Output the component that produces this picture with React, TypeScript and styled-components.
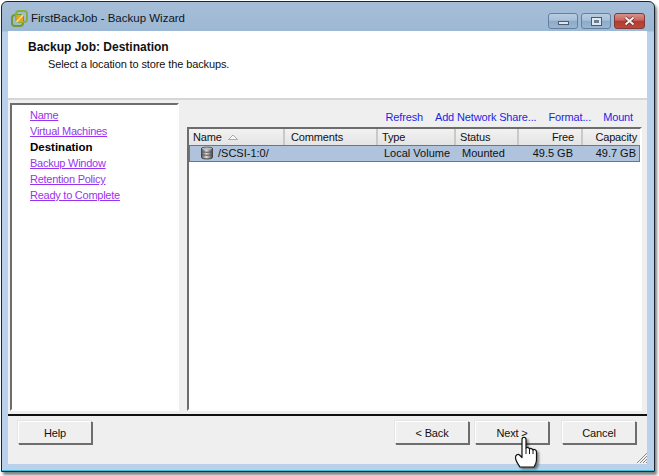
import React from "react";
import styled, { createGlobalStyle } from "styled-components";

const GlobalStyle = createGlobalStyle`
  html, body {
    margin: 0;
    padding: 0;
    background: #fff;
  }
  body {
    font-family: "Liberation Sans", Arial, sans-serif;
    font-size: 11px;
    letter-spacing: -0.15px;
    color: #111;
  }
`;

const Page = styled.div`
  width: 659px;
  height: 476px;
  padding: 1px 0 0 1px;
  box-sizing: border-box;
  overflow: hidden;
  position: relative;
`;

const Window = styled.div`
  width: 654px;
  height: 471px;
  box-sizing: border-box;
  border: 1px solid #1c2530;
  border-radius: 6px 6px 0 0;
  background: linear-gradient(180deg, #a6bed8 0, #9db8d4 29px, #b9d1ea 30px, #b9d1ea 100%);
  box-shadow: 2px 3px 3px rgba(0, 0, 0, 0.5), inset 0 -1px 0 #3fc3dc;
  padding: 0 7px 7px 6px;
  display: flex;
  flex-direction: column;
`;

const TitleBar = styled.div`
  height: 29px;
  flex: none;
  display: flex;
  align-items: center;
  gap: 3px;
  padding: 3px 0 0 3px;
  box-sizing: border-box;
`;

const Title = styled.div`
  flex: 1;
  font-size: 11.5px;
  letter-spacing: 0;
  color: #10151c;
`;

const CaptionButtons = styled.div`
  display: flex;
  gap: 3px;
  align-self: flex-start;
  margin: 8px 2px 0 0;
`;

const CaptionButton = styled.div<{ $close?: boolean }>`
  width: ${({ $close }) => ($close ? 31 : 30)}px;
  height: 16px;
  box-sizing: border-box;
  border: 1px solid ${({ $close }) => ($close ? "#7d3a36" : "#64809f")};
  border-radius: 3px;
  display: flex;
  align-items: center;
  justify-content: center;
  background: ${({ $close }) =>
    $close
      ? "linear-gradient(180deg, #d9928a 0, #c9665c 45%, #b23a2e 50%, #bb4a3c 100%)"
      : "linear-gradient(180deg, #b9cde2 0, #a8c0da 45%, #8daac9 50%, #9ab6d2 100%)"};
`;

const MinimizeGlyph = styled.div`
  width: 11px;
  height: 4px;
  margin-top: 3px;
  background: #dfe6ee;
  border: 1px solid #4d5b6b;
  box-sizing: border-box;
`;

const MaximizeGlyph = styled.div`
  width: 11px;
  height: 9px;
  background: #dfe6ee;
  border: 1px solid #4d5b6b;
  box-sizing: border-box;
  display: flex;
  align-items: center;
  justify-content: center;
  &::after {
    content: "";
    width: 5px;
    height: 3px;
    background: #6a7f96;
  }
`;

const Client = styled.div`
  flex: 1;
  min-height: 0;
  display: flex;
  flex-direction: column;
  background: #efefef;
`;

const Header = styled.div`
  height: 67px;
  flex: none;
  background: #fff;
  border-bottom: 2px solid #d6d6d6;
  box-sizing: content-box;
  overflow: hidden;
`;

const HeaderTitle = styled.div`
  font-weight: 700;
  font-size: 12px;
  letter-spacing: 0;
  line-height: 14px;
  margin: 9px 0 0 20px;
`;

const HeaderText = styled.div`
  line-height: 14px;
  letter-spacing: -0.12px;
  margin: 3px 0 0 40px;
`;

const Body = styled.div`
  flex: 1;
  min-height: 0;
  display: flex;
  gap: 8px;
  padding: 3px 5px 3px 2px;
`;

const Steps = styled.div`
  width: 169px;
  flex: none;
  box-sizing: border-box;
  background: #fff;
  border: 2px solid;
  border-color: #6d6d6d #fff #fff #6d6d6d;
  padding: 2px 0 0 18px;
  display: flex;
  flex-direction: column;
`;

const StepLink = styled.a`
  letter-spacing: -0.25px;
  line-height: 16px;
  color: #9933ee;
  text-decoration: underline;
`;

const StepCurrent = styled.div`
  font-size: 11.5px;
  letter-spacing: 0;
  line-height: 16px;
  font-weight: 700;
  color: #000;
`;

const Main = styled.div`
  flex: 1;
  min-width: 0;
  display: flex;
  flex-direction: column;
`;

const Actions = styled.div`
  height: 24px;
  flex: none;
  display: flex;
  justify-content: flex-end;
  align-items: center;
  gap: 12px;
  padding: 4px 9px 0 0;
  box-sizing: border-box;
`;

const ActionLink = styled.a`
  color: #1f1fe8;
`;

const Table = styled.div`
  flex: 1;
  min-height: 0;
  background: #fff;
  border: 2px solid;
  border-color: #6d6d6d #fff #fff #6d6d6d;
  box-sizing: border-box;
`;

const Columns = "96px 93px 78px 63px 64px 57px";

const HeaderRow = styled.div`
  display: grid;
  grid-template-columns: ${Columns};
  height: 16px;
  background: linear-gradient(180deg, #f2f2f2 0, #e4e4e4 100%);
`;

const HeaderCell = styled.div<{ $right?: boolean; $indent?: number }>`
  line-height: 16px;
  padding: 0 ${({ $right }) => ($right ? "7px" : "0")} 0 ${({ $right, $indent }) => ($right ? 0 : $indent ?? 4)}px;
  border-right: 2px solid #c9c9c9;
  box-sizing: border-box;
  white-space: nowrap;
  display: flex;
  align-items: center;
  justify-content: ${({ $right }) => ($right ? "flex-end" : "flex-start")};
  gap: 6px;
  &:last-child {
    border-right: 0;
    padding-right: 3px;
  }
`;

const SelectedRow = styled.div`
  display: grid;
  grid-template-columns: ${Columns};
  height: 17px;
  box-sizing: border-box;
  background: #afc3dc;
  border: 1px solid #4f7fa9;
`;

const Cell = styled.div<{ $rightPad?: number; $indent?: number }>`
  line-height: 14px;
  letter-spacing: 0;
  padding: 0 ${({ $rightPad }) => $rightPad ?? 0}px 1px ${({ $rightPad, $indent }) => ($rightPad ? 0 : $indent ?? 5)}px;
  white-space: nowrap;
  display: flex;
  align-items: center;
  justify-content: ${({ $rightPad }) => ($rightPad ? "flex-end" : "flex-start")};
  gap: 4px;
`;

const Footer = styled.div`
  height: 50px;
  flex: none;
  border-top: 2px solid #111;
  display: flex;
  align-items: flex-start;
  padding: 5px 10px 0 10px;
  box-sizing: border-box;
`;

const Button = styled.div<{ $gapLeft?: number }>`
  width: 74px;
  height: 23px;
  box-sizing: border-box;
  background: #efefef;
  border: 1px solid;
  border-color: #fff #6d6d6d #6d6d6d #fff;
  box-shadow: 1px 1px 0 #6d6d6d, -1px -1px 0 #e4e4e4;
  display: flex;
  align-items: center;
  justify-content: center;
  margin-left: ${({ $gapLeft }) => $gapLeft ?? 0}px;
`;

const Grip = styled.svg`
  position: absolute;
  left: 635px;
  top: 451px;
`;

const Cursor = styled.svg`
  position: absolute;
  left: 514px;
  top: 436px;
  filter: drop-shadow(2px 2px 1px rgba(0, 0, 0, 0.45));
`;

const DiskIcon = () => (
  <svg width="14" height="14" viewBox="0 0 14 14">
    <defs>
      <linearGradient id="disk" x1="0" x2="1" y1="0" y2="0">
        <stop offset="0" stopColor="#555" />
        <stop offset="0.45" stopColor="#ddd" />
        <stop offset="1" stopColor="#444" />
      </linearGradient>
    </defs>
    <path d="M1.5 2.5C1.5 .8 12.5 .8 12.5 2.5V11.5C12.5 13.4 1.5 13.4 1.5 11.5Z" fill="url(#disk)" stroke="#444" />
    <path d="M1.5 5.2C3 6.6 11 6.6 12.5 5.2M1.5 8.2C3 9.6 11 9.6 12.5 8.2" fill="none" stroke="#555" />
    <ellipse cx="7" cy="2.6" rx="5" ry="1.2" fill="#bbb" />
  </svg>
);

const SortArrow = () => (
  <svg width="10" height="6" viewBox="0 0 10 6">
    <path d="M.5 5.5L5 1l4.5 4.5Z" fill="#f7f7f7" stroke="#aaa" />
  </svg>
);

const AppLogo = () => (
  <svg width="17" height="17" viewBox="0 0 17 17">
    <rect x="1" y="5" width="11" height="11" rx="3" fill="none" stroke="#6f9a2c" strokeWidth="2" />
    <rect x="5" y="1" width="11" height="11" rx="3" fill="none" stroke="#86b03a" strokeWidth="2" />
    <rect x="5.5" y="5" width="6.5" height="7" fill="#eda21f" />
    <path d="M5.5 12L12 5" stroke="#fbe08a" strokeWidth="1.4" />
  </svg>
);

const App: React.FC = () => {
  return (
    <Page>
      <GlobalStyle />
      <Window>
        <TitleBar>
          <AppLogo />
          <Title>FirstBackJob - Backup Wizard</Title>
          <CaptionButtons>
            <CaptionButton><MinimizeGlyph /></CaptionButton>
            <CaptionButton><MaximizeGlyph /></CaptionButton>
            <CaptionButton $close>
              <svg width="13" height="10" viewBox="0 0 13 10">
                <path d="M2.5 1.5L10.5 8.5M10.5 1.5L2.5 8.5" stroke="#5d2a26" strokeWidth="3.6" />
                <path d="M2.5 1.5L10.5 8.5M10.5 1.5L2.5 8.5" stroke="#f3efec" strokeWidth="2.2" />
              </svg>
            </CaptionButton>
          </CaptionButtons>
        </TitleBar>
        <Client>
          <Header>
            <HeaderTitle>Backup Job: Destination</HeaderTitle>
            <HeaderText>Select a location to store the backups.</HeaderText>
          </Header>
          <Body>
            <Steps>
              <StepLink>Name</StepLink>
              <StepLink>Virtual Machines</StepLink>
              <StepCurrent>Destination</StepCurrent>
              <StepLink>Backup Window</StepLink>
              <StepLink>Retention Policy</StepLink>
              <StepLink>Ready to Complete</StepLink>
            </Steps>
            <Main>
              <Actions>
                <ActionLink>Refresh</ActionLink>
                <ActionLink>Add Network Share...</ActionLink>
                <ActionLink>Format...</ActionLink>
                <ActionLink>Mount</ActionLink>
              </Actions>
              <Table>
                <HeaderRow>
                  <HeaderCell>Name <SortArrow /></HeaderCell>
                  <HeaderCell $indent={6}>Comments</HeaderCell>
                  <HeaderCell>Type</HeaderCell>
                  <HeaderCell>Status</HeaderCell>
                  <HeaderCell $right>Free</HeaderCell>
                  <HeaderCell $right>Capacity</HeaderCell>
                </HeaderRow>
                <SelectedRow>
                  <Cell $indent={10}><DiskIcon />/SCSI-1:0/</Cell>
                  <Cell />
                  <Cell>Local Volume</Cell>
                  <Cell>Mounted</Cell>
                  <Cell $rightPad={11}>49.5 GB</Cell>
                  <Cell $rightPad={5}>49.7 GB</Cell>
                </SelectedRow>
              </Table>
            </Main>
          </Body>
          <Footer>
            <Button>Help</Button>
            <Button $gapLeft={303}>&lt; Back</Button>
            <Button $gapLeft={6}>Next &gt;</Button>
            <Button $gapLeft={13}>Cancel</Button>
          </Footer>
        </Client>
      </Window>
      <Grip width="13" height="13" viewBox="0 0 13 13">
        <path d="M12 2L2 12M12 5L5 12M12 8L8 12M12 11L11 12" stroke="#8b8b8b" strokeWidth="1" />
      </Grip>
      <Cursor width="26" height="34" viewBox="0 0 26 34">
        <path d="M6 31C4 28 1.5 25 1.5 21.5C1.5 19 4 17.5 5.5 19L8 21.5V3.5C8 .8 12 .8 12 3.5V12C13.5 11 15 11.5 15.5 13C16.5 12 18.5 12.5 19 14C20 13 22.5 13.5 22.5 16V24C22.5 27 21 29 20 31Z" fill="#fff" stroke="#111" strokeWidth="1.2" strokeLinejoin="round" />
        <path d="M12 12V18M15.5 13V18M19 14V18" stroke="#111" strokeWidth="1" fill="none" />
      </Cursor>
    </Page>
  );
};

export default App;
